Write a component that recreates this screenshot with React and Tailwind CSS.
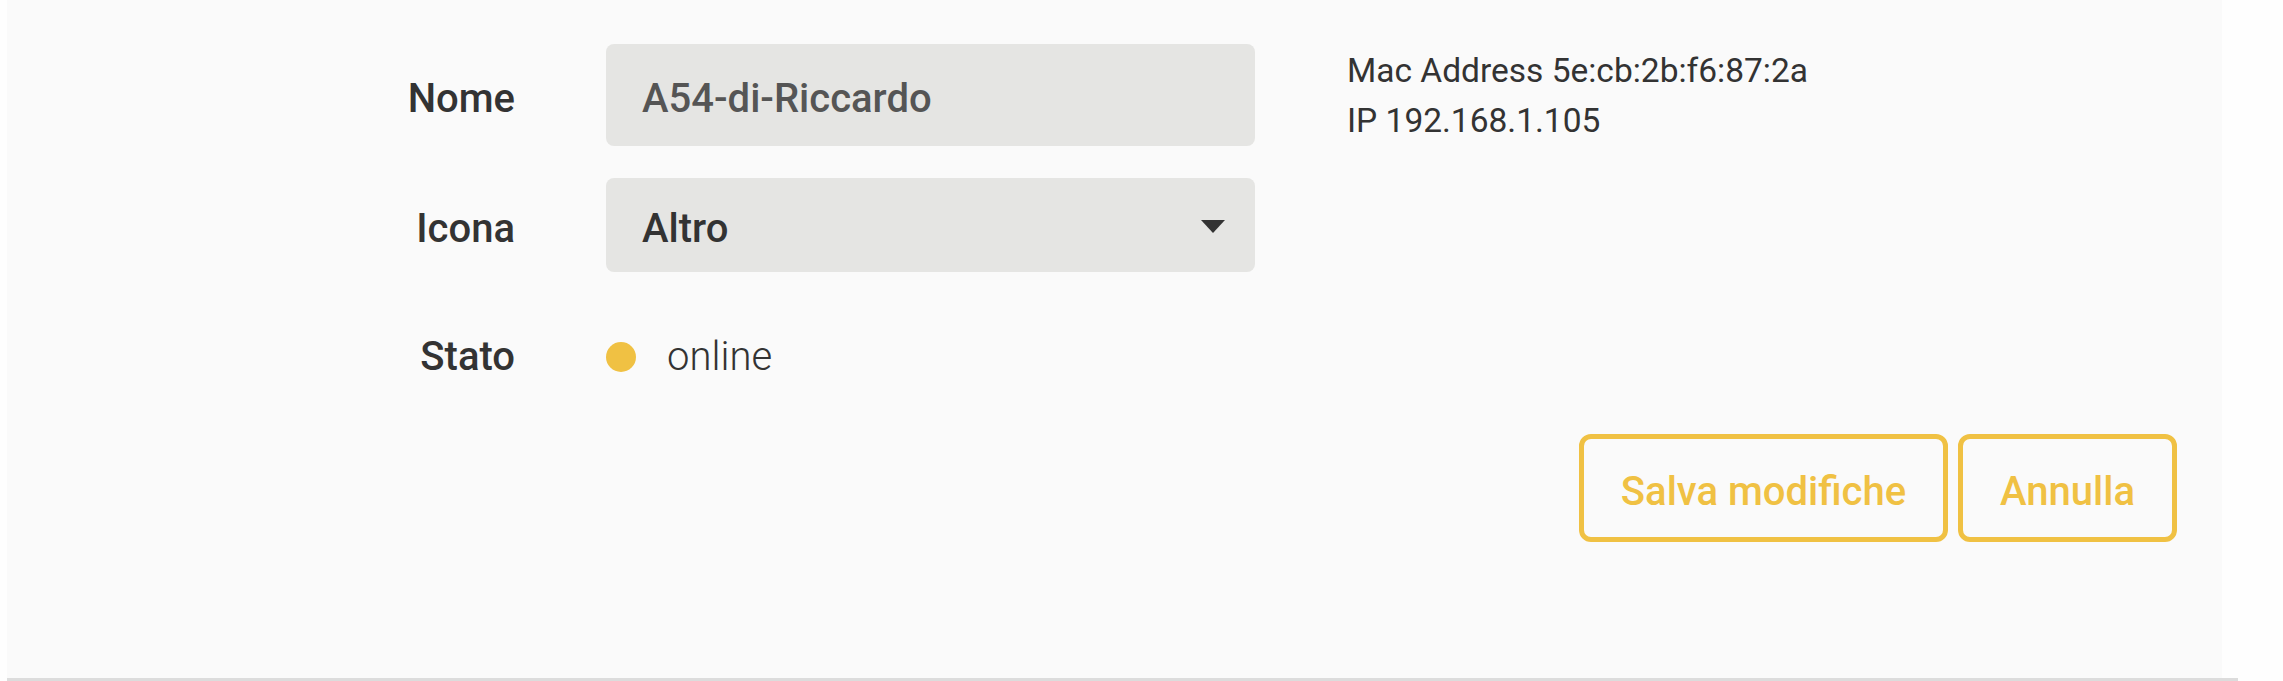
import React from "react";

const AppDeviceForm = () => {
  return (
    <div className="h-[681px] bg-[#fefefe] pl-[7px] font-['Roboto',sans-serif] text-[#333333]">
      <div className="w-[2231px] border-b-[3px] border-[#dcdcdc]">
        <div className="w-[2215px] h-[678px] bg-[#fafafa] pt-[44px]">
          <div className="flex">
            {/* form rows */}
            <div className="ml-[308px] grid grid-cols-[200px_649px] gap-x-[91px] items-center">
              <div className="pt-[8px] text-right text-[40px] font-medium leading-none">Nome</div>
              <div className="h-[102px] rounded-lg bg-[#e5e5e3] flex items-center pl-[36px] text-[40px] font-medium text-[#555555]">
                <span className="pt-[8px] leading-none">A54-di-Riccardo</span>
              </div>

              <div className="mt-[32px] pt-[8px] text-right text-[40px] font-medium leading-none">Icona</div>
              <div className="mt-[32px] h-[94px] rounded-lg bg-[#e5e5e3] flex items-center justify-between pl-[36px] pr-[30px] text-[40px] font-medium text-[#333333]">
                <span className="pt-[8px] leading-none">Altro</span>
                <svg width="24" height="13" viewBox="0 0 24 13" className="mt-[2px]">
                  <path d="M0 0 L24 0 L12 13 Z" fill="#333333" />
                </svg>
              </div>

              <div className="mt-[65px] text-right text-[40px] font-medium leading-none">Stato</div>
              <div className="mt-[65px] flex items-center h-[40px] gap-[31px]">
                <span className="w-[30px] h-[30px] rounded-full bg-[#f0c143]"></span>
                <span className="text-[40px] font-light leading-none">online</span>
              </div>
            </div>

            {/* device info */}
            <div className="ml-[92px] pt-[2px] text-[33.5px] font-normal leading-[50px]">
              <div>Mac Address 5e:cb:2b:f6:87:2a</div>
              <div>IP 192.168.1.105</div>
            </div>
          </div>

          <div className="flex justify-end gap-[10px] pr-[45px] mt-[57px]">
            <button className="h-[108px] px-[37px] pt-[8px] border-[5px] border-[#f0c143] rounded-[12px] text-[40px] font-medium text-[#f0c143]">
              Salva modifiche
            </button>
            <button className="h-[108px] px-[37px] pt-[8px] border-[5px] border-[#f0c143] rounded-[12px] text-[40px] font-medium text-[#f0c143]">
              Annulla
            </button>
          </div>
        </div>
      </div>
    </div>
  );
};

export default function App() {
  return <AppDeviceForm />;
}
